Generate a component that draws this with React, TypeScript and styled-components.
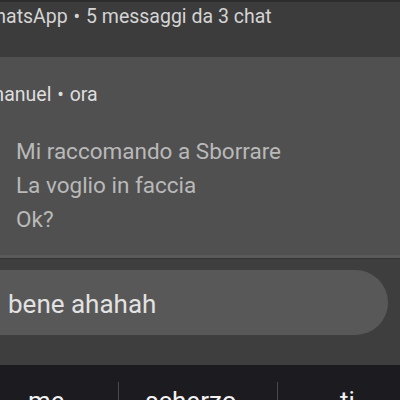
import React from "react";
import styled, { createGlobalStyle } from "styled-components";

const Global = createGlobalStyle`
  html, body { margin: 0; padding: 0; background: #1c1b20; }
  body { font-family: Roboto, "Noto Sans", sans-serif; }
`;

const Screen = styled.div`
  width: 400px;
  height: 400px;
  overflow: hidden;
  display: flex;
  flex-direction: column;
  font-family: Roboto, "Noto Sans", sans-serif;
`;

const TopBar = styled.div`
  height: 57px;
  box-sizing: border-box;
  flex: none;
  background: #3c3c3c;
  border-top: 2px solid #2c2c2c;
  padding-top: 3px;
  overflow: hidden;
  white-space: nowrap;
`;

const HeaderText = styled.div<{ $shift: number }>`
  margin-left: ${(p) => p.$shift}px;
  font-size: 19.5px;
  line-height: 24px;
  color: #d4d4d4;
`;

const Bullet = styled.span`
  margin: 0 1px;
`;

const Card = styled.div`
  height: 201px;
  box-sizing: border-box;
  flex: none;
  background: #505050;
  border-bottom: 3px solid #5a5a5a;
  overflow: hidden;
  white-space: nowrap;
`;

const Sender = styled(HeaderText)`
  margin-top: 26px;
  color: #dedede;
`;

const Messages = styled.div`
  margin-top: 27px;
  padding-left: 16px;
  display: flex;
  flex-direction: column;
`;

const Line = styled.div`
  font-size: 22.5px;
  line-height: 34px;
  color: #b9b9b9;
`;

const ReplyArea = styled.div`
  flex: none;
  height: 107px;
  box-sizing: border-box;
  background: #3e3e3e;
  border-top: 1px solid #343434;
  padding-top: 11px;
`;

const Pill = styled.div`
  margin-left: -40px;
  width: 428px;
  height: 65px;
  border-radius: 33px;
  background: #585858;
  display: flex;
  align-items: center;
  padding-left: 48px;
  box-sizing: border-box;
`;

const ReplyText = styled.span`
  font-size: 26px;
  color: #e2e2e2;
  padding-top: 2px;
`;

const Suggestions = styled.div`
  flex: 1;
  background: #1c1b20;
  display: grid;
  grid-template-columns: 119px 159px 122px;
  padding-top: 17px;
  box-sizing: border-box;
  overflow: hidden;
`;

const Suggestion = styled.div<{ $pad: number; $divider: boolean }>`
  padding-left: ${(p) => p.$pad}px;
  padding-top: 4px;
  font-size: 26px;
  color: #f2f2f2;
  white-space: nowrap;
  border-right: ${(p) => (p.$divider ? "1px solid #4a4a4e" : "none")};
`;

export default function App() {
  return (
    <>
      <Global />
      <Screen>
        <TopBar>
          <HeaderText $shift={-22}>
            WhatsApp <Bullet>•</Bullet> 5 messaggi da 3 chat
          </HeaderText>
        </TopBar>
        <Card>
          <Sender $shift={-24}>
            Emanuel <Bullet>•</Bullet> ora
          </Sender>
          <Messages>
            <Line>Mi raccomando a Sborrare</Line>
            <Line>La voglio in faccia</Line>
            <Line>Ok?</Line>
          </Messages>
        </Card>
        <ReplyArea>
          <Pill>
            <ReplyText>bene ahahah</ReplyText>
          </Pill>
        </ReplyArea>
        <Suggestions>
          <Suggestion $pad={28} $divider>me</Suggestion>
          <Suggestion $pad={26} $divider>scherzo</Suggestion>
          <Suggestion $pad={62} $divider={false}>ti</Suggestion>
        </Suggestions>
      </Screen>
    </>
  );
}
